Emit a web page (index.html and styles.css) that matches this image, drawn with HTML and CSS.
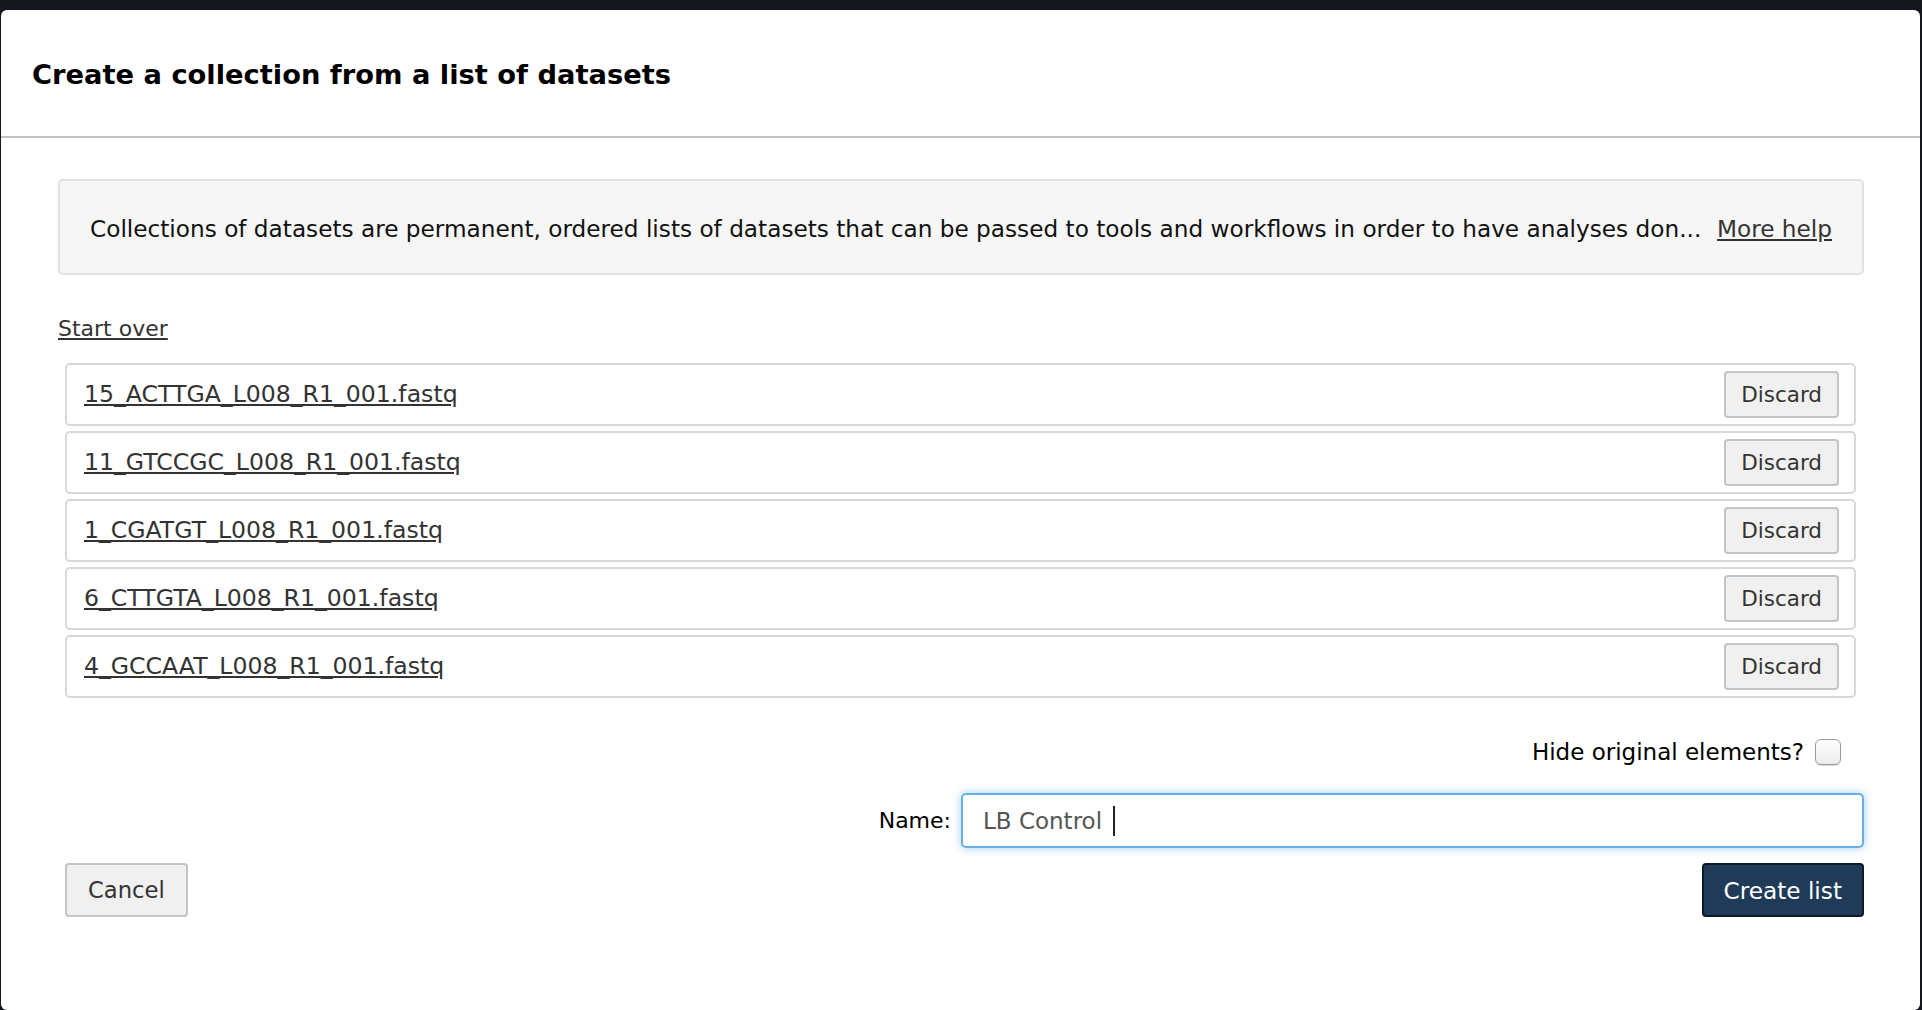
FILE: index.html
```html
<!DOCTYPE html>
<html lang="en">
<head>
<meta charset="utf-8">
<title>Create a collection from a list of datasets</title>
<link rel="stylesheet" href="styles.css">
</head>
<body>
<div class="backdrop">
  <div class="modal">
    <div class="modal-header">
      <h4 class="modal-title">Create a collection from a list of datasets</h4>
    </div>
    <div class="modal-body">
      <div class="help-box">
        <span class="help-text">Collections of datasets are permanent, ordered lists of datasets that can be passed to tools and workflows in order to have analyses don...</span>
        <a class="link" href="#">More help</a>
      </div>
      <a class="link start-over" href="#">Start over</a>
      <ul class="element-list">
        <li class="element"><a class="link" href="#">15_ACTTGA_L008_R1_001.fastq</a><button class="btn">Discard</button></li>
        <li class="element"><a class="link" href="#">11_GTCCGC_L008_R1_001.fastq</a><button class="btn">Discard</button></li>
        <li class="element"><a class="link" href="#">1_CGATGT_L008_R1_001.fastq</a><button class="btn">Discard</button></li>
        <li class="element"><a class="link" href="#">6_CTTGTA_L008_R1_001.fastq</a><button class="btn">Discard</button></li>
        <li class="element"><a class="link" href="#">4_GCCAAT_L008_R1_001.fastq</a><button class="btn">Discard</button></li>
      </ul>
      <div class="hide-row">
        <label class="hide-label">Hide original elements?</label>
        <span class="checkbox"></span>
      </div>
      <div class="name-row">
        <label class="name-label">Name:</label>
        <div class="name-input"><span class="name-value">LB Control</span><span class="caret"></span></div>
      </div>
      <div class="button-row">
        <button class="btn btn-lg">Cancel</button>
        <button class="btn btn-lg btn-primary">Create list</button>
      </div>
    </div>
  </div>
</div>
</body>
</html>
```
FILE: styles.css
```css
html, body {
  margin: 0;
  padding: 0;
}
body {
  background: #15171f;
  font-family: "DejaVu Sans", Verdana, sans-serif;
  color: #222;
}
.backdrop {
  padding: 10px 2px 0 1px;
  height: 1000px;
}
.modal {
  background: #fff;
  border-radius: 6px;
  height: 1000px;
  box-sizing: border-box;
}
.modal-header {
  height: 128px;
  box-sizing: border-box;
  border-bottom: 2px solid #c2c2c2;
  display: flex;
  align-items: center;
  padding: 3px 0 0 31px;
}
.modal-title {
  margin: 0;
  font-size: 27.3px;
  font-weight: bold;
  color: #000;
}
.modal-body {
  padding: 41px 56px 0 57px;
}
.help-box {
  height: 96px;
  box-sizing: border-box;
  background: #f6f6f6;
  border: 2px solid #e2e2e2;
  border-radius: 5px;
  display: flex;
  align-items: center;
  justify-content: space-between;
  padding: 3px 30px 0 30px;
  font-size: 23.2px;
  color: #111;
}
.link {
  color: #333;
  text-decoration: underline;
}
.start-over {
  display: block;
  margin-top: 40px;
  font-size: 22px;
  line-height: 28px;
  width: max-content;
}
.element-list {
  list-style: none;
  margin: 20px 8px 0 7px;
  padding: 0;
  display: flex;
  flex-direction: column;
  gap: 5px;
}
.element {
  height: 63px;
  box-sizing: border-box;
  border: 2px solid #d8d8d8;
  border-radius: 5px;
  display: flex;
  align-items: center;
  justify-content: space-between;
  padding: 0 15px 0 17px;
  font-size: 23.6px;
}
.element .link {
  margin-top: -1px;
}
.btn {
  font-family: inherit;
  font-size: 21.5px;
  color: #333;
  background: #f0f0f0;
  border: 2px solid #c4c4c4;
  border-radius: 4px;
  height: 47px;
  padding: 0 15px;
  cursor: pointer;
}
.hide-row {
  margin-top: 40px;
  display: flex;
  justify-content: flex-end;
  align-items: center;
  gap: 11px;
  padding-right: 23px;
  height: 28px;
}
.hide-label {
  font-size: 23px;
  color: #000;
}
.checkbox {
  width: 24px;
  height: 24px;
  border: 1px solid #9a9a9a;
  border-radius: 6px;
  background: linear-gradient(#fefefe, #ececec);
  box-shadow: 0 1px 1px rgba(0,0,0,0.15);
}
.name-row {
  margin-top: 27px;
  display: flex;
  justify-content: flex-end;
  align-items: center;
  gap: 10px;
}
.name-label {
  font-size: 22px;
  color: #000;
}
.name-input {
  width: 903px;
  height: 55px;
  box-sizing: border-box;
  border: 2px solid #66afe9;
  border-radius: 5px;
  box-shadow: 0 0 10px rgba(102, 175, 233, 0.6);
  display: flex;
  align-items: center;
  padding-left: 20px;
  font-size: 23px;
  color: #555;
}
.caret {
  display: inline-block;
  width: 2px;
  height: 30px;
  background: #222;
  margin-left: 11px;
}
.button-row {
  margin: 15px 0 0 7px;
  display: flex;
  justify-content: space-between;
}
.btn-lg {
  height: 54px;
  padding: 0 21px;
  font-size: 22.7px;
}
.btn-primary {
  background: #1f3b58;
  border-color: #0d1a27;
  color: #fff;
  font-size: 23.2px;
  padding: 0 20px;
}
```
